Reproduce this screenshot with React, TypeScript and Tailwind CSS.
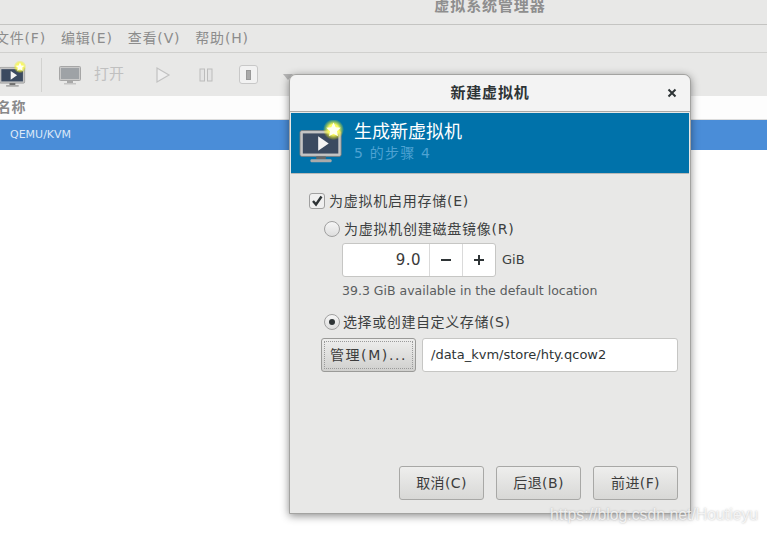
import type { ReactNode } from "react";

const FONT = "font-['DejaVu_Sans','Noto_Sans_CJK_SC',sans-serif]";

function MonitorIcon({ size, id }: { size: number; id: string }) {
  return (
    <svg width={size} height={size} viewBox="0 0 48 48">
      <defs>
        <radialGradient id={id}>
          <stop offset="0.5" stopColor="#fbfb60" />
          <stop offset="1" stopColor="#eef000" stopOpacity="0" />
        </radialGradient>
      </defs>
      <rect x="1" y="11" width="43" height="27" rx="2" fill="#c4c4c4" stroke="#777" strokeWidth="0.8" />
      <rect x="4" y="14" width="37" height="21" fill="#3b4a60" />
      <path d="M20 17 L31 24.5 L20 32 Z" fill="#f4f4f4" />
      <rect x="18" y="38" width="10" height="3" fill="#666" />
      <rect x="12" y="41" width="22" height="3" rx="1" fill="#aaa" />
      <circle cx="36" cy="10" r="11" fill={`url(#${id})`} />
      <path d="M36 2.5 L38.3 7.6 L43.5 8.2 L39.6 11.7 L40.7 17 L36 14.3 L31.3 17 L32.4 11.7 L28.5 8.2 L33.7 7.6 Z" fill="#fffff0" />
    </svg>
  );
}

function MenuItem({ children }: { children: ReactNode }) {
  return <span className="text-[14px] text-[#8c8c8c] tracking-[0.8px]">{children}</span>;
}

function DialogButton({ children }: { children: ReactNode }) {
  return (
    <button className="w-[85px] h-[34px] rounded-[3px] border border-[#a8a8a6] bg-gradient-to-b from-[#eeeeed] to-[#d8d8d6] text-[14px] text-[#3c3c3c] tracking-[0.4px]">
      {children}
    </button>
  );
}

export default function App() {
  return (
    <div className={`relative w-[767px] h-[533px] overflow-hidden bg-white ${FONT}`}>
      <div className="h-[25px] bg-[#e8e8e7] border-b border-[#c4c4c2] flex justify-center pl-[213px]">
        <span className="text-[15px] font-bold text-[#8e8e8e] leading-[12px] tracking-[0.9px]">虚拟系统管理器</span>
      </div>
      <div className="h-[28px] bg-[#e8e8e7] border-b border-[#d0d0ce] flex items-center gap-[15px] -ml-[5px]">
        <MenuItem>文件(F)</MenuItem>
        <MenuItem>编辑(E)</MenuItem>
        <MenuItem>查看(V)</MenuItem>
        <MenuItem>帮助(H)</MenuItem>
      </div>
      <div className="h-[43px] bg-[#e8e8e7] flex items-center">
        <div className="ml-[-2px] w-[30px] flex justify-center">
          <MonitorIcon size={28} id="toolbar-new" />
        </div>
        <div className="ml-[13px] w-px h-[34px] bg-[#d2d2d0]" />
        <svg className="ml-[17px]" width="22" height="22" viewBox="0 0 22 22">
          <rect x="0.5" y="2.5" width="21" height="14" rx="1" fill="#c8c8c8" stroke="#a6a6a6" />
          <rect x="2" y="4" width="18" height="11" fill="#9ea2a6" />
          <rect x="8" y="17" width="6" height="2" fill="#a8a8a8" />
          <rect x="5" y="19" width="12" height="1.5" fill="#c4c4c4" />
        </svg>
        <span className="ml-[13px] text-[15px] text-[#c0c0c0]">打开</span>
        <svg className="ml-[31px]" width="16" height="18" viewBox="0 0 16 18">
          <path d="M2 2 L14 9 L2 16 Z" fill="#eeeeee" stroke="#c2c2c2" strokeWidth="1.2" />
        </svg>
        <svg className="ml-[28px]" width="14" height="14" viewBox="0 0 14 14">
          <rect x="1" y="1" width="4.5" height="12" fill="#e4e4e4" stroke="#bcbcbc" />
          <rect x="8.5" y="1" width="4.5" height="12" fill="#e4e4e4" stroke="#bcbcbc" />
        </svg>
        <div className="ml-[26px] w-[19px] h-[19px] rounded-[3px] border border-[#c8c8c8] bg-[#f2f2f2] flex items-center justify-center">
          <div className="w-[5px] h-[10px] border border-[#999] bg-[#aaa]" />
        </div>
        <div className="ml-[25px] mt-[4px] w-0 h-0 border-x-[5px] border-x-transparent border-t-[6px] border-t-[#b4b4b4]" />
      </div>
      <div className="h-[24px] bg-[#fdfdfd] border-b border-[#dcdcdc] flex items-center -ml-[3px]">
        <span className="text-[14px] font-bold text-[#8a8a8a] tracking-[0.4px]">名称</span>
      </div>
      <div className="h-[30px] bg-[#4a8dd8] flex items-center pl-[10px] pt-[1px]">
        <span className="text-[11px] text-[#dbe8f7]">QEMU/KVM</span>
      </div>

      {/* dialog window */}
      <div className="absolute left-[289px] top-[74px] w-[402px] h-[440px] rounded-t-[7px] border border-[#a3a3a1] bg-[#e8e8e7] shadow-[0_2px_8px_rgba(0,0,0,0.45)] flex flex-col">
        <div className="h-[37px] shrink-0 rounded-t-[7px] bg-[#f3f3f3] border-b border-[#a9a9a7] flex items-center justify-center relative">
          <span className="text-[15px] font-bold text-[#2e3436] tracking-[0.8px]">新建虚拟机</span>
          <svg className="absolute right-[13px] top-[13px]" width="10" height="10" viewBox="0 0 10 10">
            <path d="M1.5 1.5 L8.5 8.5 M8.5 1.5 L1.5 8.5" stroke="#2e3436" strokeWidth="2" />
          </svg>
        </div>
        <div className="h-[61px] shrink-0 mt-px mx-px bg-[#0072aa] border-b border-[#b9b9b7] flex items-center pl-[8px]">
          <MonitorIcon size={46} id="banner-new" />
          <div className="ml-[9px] -mt-[2px] flex flex-col">
            <span className="text-[18px] leading-[22px] text-white">生成新虚拟机</span>
            <span className="text-[14px] leading-[21px] text-[#4ea2d2] tracking-[1.2px]">5 的步骤 4</span>
          </div>
        </div>

        <div className="flex-1 flex flex-col pl-[19px] pr-[12px] pt-[17px] text-[#3c3f40] text-[14px]">
          <label className="flex items-center h-[20px] tracking-[0.75px]">
            <span className="w-[16px] h-[16px] rounded-[3px] border border-[#a0a0a0] bg-[#f0f0f0] flex items-center justify-center mr-[4px]">
              <svg width="12" height="12" viewBox="0 0 12 12">
                <path d="M2 6 L5 9.5 L10.5 1.5" fill="none" stroke="#2e3436" strokeWidth="2.4" />
              </svg>
            </span>
            为虚拟机启用存储(E)
          </label>

          <label className="flex items-center h-[20px] mt-[8px] ml-[15px] tracking-[0.75px]">
            <span className="w-[16px] h-[16px] rounded-full border border-[#a0a0a0] bg-gradient-to-b from-[#f6f6f6] to-[#dedede] mr-[4px]" />
            为虚拟机创建磁盘镜像(R)
          </label>

          <div className="flex items-center mt-[4px] ml-[33px]">
            <div className="w-[154px] h-[34px] rounded-[3px] border border-[#c6c6c4] bg-white flex items-center">
              <span className="flex-1 text-right pr-[8px] text-[15px] tracking-[0.5px] text-[#3a3a3a]">9.0</span>
              <span className="w-[33px] h-full border-l border-[#dadada] flex items-center justify-center">
                <svg width="10" height="2" viewBox="0 0 10 2"><rect width="10" height="2" fill="#2e3436" /></svg>
              </span>
              <span className="w-[33px] h-full border-l border-[#dadada] flex items-center justify-center">
                <svg width="10" height="10" viewBox="0 0 10 10">
                  <rect y="4" width="10" height="2" fill="#2e3436" />
                  <rect x="4" width="2" height="10" fill="#2e3436" />
                </svg>
              </span>
            </div>
            <span className="ml-[6px] text-[13px]">GiB</span>
          </div>

          <div className="ml-[33px] mt-[4px] h-[20px] flex items-center text-[12.5px] text-[#5a5d5e]">
            39.3 GiB available in the default location
          </div>

          <label className="flex items-center h-[20px] mt-[11px] ml-[15px] tracking-[0.6px]">
            <span className="w-[16px] h-[16px] rounded-full border border-[#a0a0a0] bg-gradient-to-b from-[#f6f6f6] to-[#dedede] flex items-center justify-center mr-[3px]">
              <span className="w-[6px] h-[6px] rounded-full bg-[#2e3436]" />
            </span>
            选择或创建自定义存储(S)
          </label>

          <div className="flex items-center gap-[6px] mt-[6px] ml-[12px]">
            <button className="relative w-[95px] h-[34px] rounded-[3px] border border-[#9a9a98] bg-gradient-to-b from-[#eeeeed] to-[#d0d0ce] text-[14px] text-[#3c3c3c] tracking-[1.6px]">
              <span className="absolute inset-[2px] border border-dotted border-[#9a9a9a]" />
              管理(M)...
            </button>
            <div className="w-[256px] h-[34px] rounded-[3px] border border-[#c6c6c4] bg-white flex items-center pl-[8px] text-[13px] text-[#2e3436]">
              /data_kvm/store/hty.qcow2
            </div>
          </div>

          <div className="mt-auto mb-[13px] flex justify-end gap-[12px]">
            <DialogButton>取消(C)</DialogButton>
            <DialogButton>后退(B)</DialogButton>
            <DialogButton>前进(F)</DialogButton>
          </div>
        </div>
      </div>

      {/* blog watermark */}
      <span className="absolute left-[550px] top-[503px] text-[15.8px] font-['Liberation_Sans',sans-serif] text-white/75 [text-shadow:0_0_2px_rgba(120,120,120,0.55)]">
        https://blog.csdn.net/Houtieyu
      </span>
    </div>
  );
}
